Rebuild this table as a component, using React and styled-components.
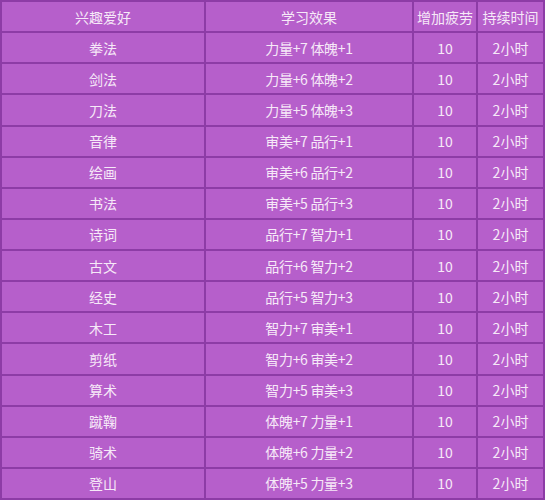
import { Fragment } from 'react';
import styled, { createGlobalStyle } from 'styled-components';

const rows = [
	['拳法', '力量+7 体魄+1'],
	['剑法', '力量+6 体魄+2'],
	['刀法', '力量+5 体魄+3'],
	['音律', '审美+7 品行+1'],
	['绘画', '审美+6 品行+2'],
	['书法', '审美+5 品行+3'],
	['诗词', '品行+7 智力+1'],
	['古文', '品行+6 智力+2'],
	['经史', '品行+5 智力+3'],
	['木工', '智力+7 审美+1'],
	['剪纸', '智力+6 审美+2'],
	['算术', '智力+5 审美+3'],
	['蹴鞠', '体魄+7 力量+1'],
	['骑术', '体魄+6 力量+2'],
	['登山', '体魄+5 力量+3'],
];

const GlobalStyle = createGlobalStyle`
	html, body {
		margin: 0;
		padding: 0;
		background: #b55fca;
	}
`;

const Table = styled.div`
	width: 545px;
	height: 500px;
	box-sizing: border-box;
	padding: 2px;
	display: grid;
	grid-template-columns: 202px 206px 62px 65px;
	grid-template-rows: repeat(16, 1fr);
	gap: 2px;
	background: #8d3ca6;
	font-family: 'Noto Sans CJK SC', 'Microsoft YaHei', sans-serif;
`;

const Cell = styled.div`
	background: #b65fcb;
	color: #f6e9f8;
	font-size: 14px;
	display: flex;
	align-items: center;
	justify-content: center;
	white-space: nowrap;
	letter-spacing: ${(p) => (p.$tight ? '-0.3px' : '0')};
`;

export default function App() {
	return (
		<>
			<GlobalStyle />
			<Table>
				<Cell>兴趣爱好</Cell>
				<Cell>学习效果</Cell>
				<Cell>增加疲劳</Cell>
				<Cell>持续时间</Cell>
				{rows.map(([name, effect]) => (
					<Fragment key={name}>
						<Cell>{name}</Cell>
						<Cell $tight>{effect}</Cell>
						<Cell>10</Cell>
						<Cell>2小时</Cell>
					</Fragment>
				))}
			</Table>
		</>
	);
}
